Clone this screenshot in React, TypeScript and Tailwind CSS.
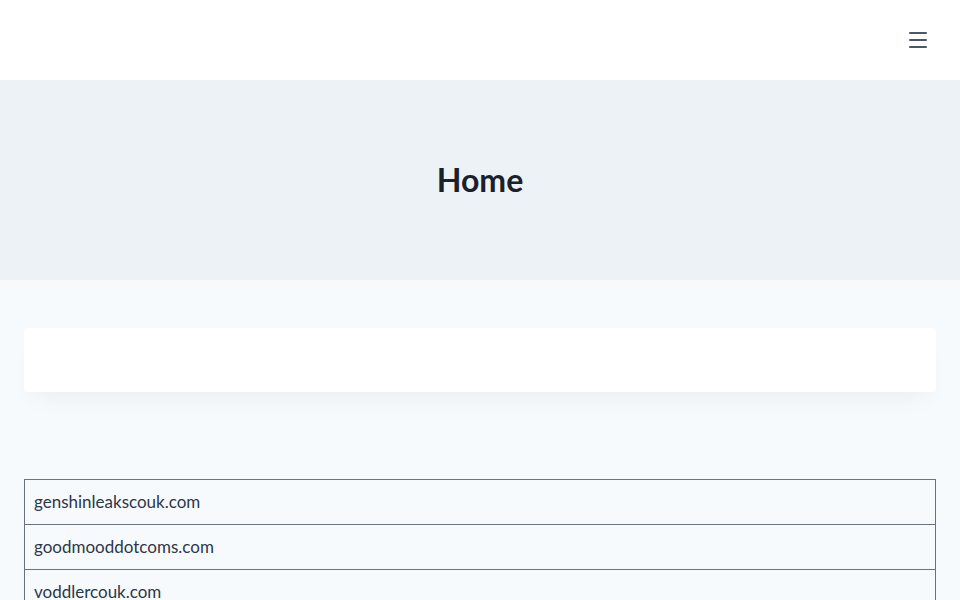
import { Menu } from "lucide-react";

const domains = ["genshinleakscouk.com", "goodmooddotcoms.com", "voddlercouk.com", "example-row.com"];

export default function App() {
  return (
    <div className="h-[600px] overflow-hidden bg-[#f7fafc] font-['Lato',sans-serif] text-[#2d3748]">
      <header className="flex h-20 items-center justify-end bg-white px-[30px]">
        <button type="button" className="text-[#4a5568]">
          <Menu className="size-6" strokeWidth={2} />
        </button>
      </header>

      <section className="flex h-[200px] items-center justify-center bg-[#edf2f7]">
        <h1 className="text-[32px] font-bold text-[#1a202c]">Home</h1>
      </section>

      <main className="px-6 pt-12">
        <div className="h-16 rounded bg-white shadow-[0_15px_25px_-10px_rgba(0,0,0,0.05)]" />

        <table className="mt-[87px] w-full border-collapse text-[17px]">
          <tbody>
            {domains.map((d) => (
              <tr key={d}>
                <td className="h-[45px] border border-[#6b7280] px-[9px] py-0 text-[#2d3748]">{d}</td>
              </tr>
            ))}
          </tbody>
        </table>
      </main>
    </div>
  );
}
